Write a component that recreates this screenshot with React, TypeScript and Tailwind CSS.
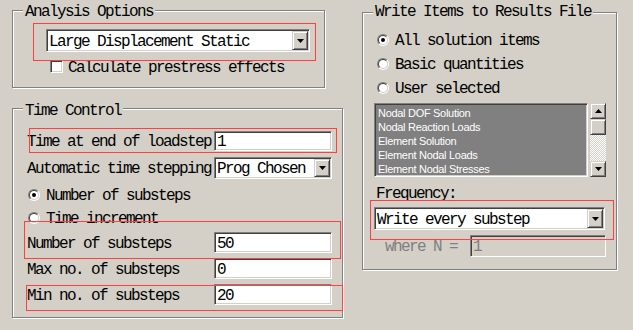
import { clsx } from 'clsx';

const sunken =
  'border border-t-[#808080] border-l-[#808080] border-r-white border-b-white shadow-[inset_1px_1px_0_#404040,inset_-1px_-1px_0_#d4d0c8]';
const raised =
  'border border-t-[#d4d0c8] border-l-[#d4d0c8] border-r-[#404040] border-b-[#404040] shadow-[inset_1px_1px_0_#fff,inset_-1px_-1px_0_#808080] bg-[#d4d0c8]';
const group =
  'relative border border-[#808080] shadow-[inset_1px_1px_0_#fff,1px_1px_0_#fff]';

function Arrow({ up = false }: { up?: boolean }) {
  return (
    <svg width="7" height="4" viewBox="0 0 7 4" className="block">
      <polygon points={up ? '3.5,0 7,4 0,4' : '0,0 7,0 3.5,4'} fill="#000" />
    </svg>
  );
}

function Combo({ text, className }: { text: string; className?: string }) {
  return (
    <div className={clsx('flex bg-white p-[1px]', sunken, className)}>
      <span className="flex-1 flex items-center pl-[1px] pt-[2px] whitespace-nowrap overflow-hidden">{text}</span>
      <div className={clsx('w-[16px] flex items-center justify-center', raised)}>
        <Arrow />
      </div>
    </div>
  );
}

function Field({ value, disabled = false, className }: { value: string; disabled?: boolean; className?: string }) {
  return (
    <div
      className={clsx(
        'flex items-center pl-[2px] pt-[2px]',
        sunken,
        disabled ? 'bg-[#d4d0c8] text-[#808080]' : 'bg-white',
        className,
      )}
    >
      {value}
    </div>
  );
}

function Radio({ checked = false }: { checked?: boolean }) {
  return (
    <div className="w-[12px] h-[12px] shrink-0 rounded-full border border-t-[#808080] border-l-[#808080] border-r-white border-b-white">
      <div className="w-full h-full rounded-full bg-white border border-t-[#404040] border-l-[#404040] border-r-[#d4d0c8] border-b-[#d4d0c8] flex items-center justify-center">
        {checked && <div className="w-[4px] h-[4px] rounded-full bg-black" />}
      </div>
    </div>
  );
}

function RadioRow({ label, checked, className }: { label: string; checked?: boolean; className?: string }) {
  return (
    <div className={clsx('flex items-center h-[12px]', className)}>
      <Radio checked={checked} />
      <span className="ml-[6px] pt-[2px] whitespace-nowrap">{label}</span>
    </div>
  );
}

function Title({ text, top }: { text: string; top: string }) {
  return (
    <span className={clsx('absolute left-[10px] px-[2px] bg-[#d4d0c8] whitespace-nowrap', top)}>{text}</span>
  );
}

function LabeledField({ label, value, className }: { label: string; value: string; className?: string }) {
  return (
    <div className={clsx('flex items-center h-[21px]', className)}>
      <span className="w-[201px] shrink-0 pl-[14px] pt-[2px] whitespace-nowrap">{label}</span>
      <Field value={value} className="w-[118px] h-full" />
    </div>
  );
}

const listItems = [
  'Nodal DOF Solution',
  'Nodal Reaction Loads',
  'Element Solution',
  'Element Nodal Loads',
  'Element Nodal Stresses',
];

export default function App() {
  return (
    <div className="relative w-[633px] h-[330px] overflow-hidden bg-[#d4d0c8] text-black font-['Liberation_Mono',monospace] text-[16px] tracking-[-1.6px] leading-[18px] flex items-start pl-[12px] pt-[10px]">
      {/* left column */}
      <div className="flex flex-col w-[331px]">
        <div className={clsx(group, 'w-[313px] h-[78px]')}>
          <Title text="Analysis Options" top="top-[-8px]" />
          <Combo text="Large Displacement Static" className="ml-[33px] mt-[18px] w-[264px] h-[23px]" />
          <div className="flex items-center ml-[37px] mt-[8px] h-[13px]">
            <div className={clsx('w-[13px] h-[13px] bg-white', sunken)} />
            <span className="ml-[5px] pt-[2px] whitespace-nowrap">Calculate prestress effects</span>
          </div>
        </div>

        <div className={clsx(group, 'mt-[20px] w-[331px] h-[210px]')}>
          <Title text="Time Control" top="top-[-7px]" />
          <LabeledField label="Time at end of loadstep" value="1" className="mt-[22px] !h-[20px]" />
          <div className="flex items-center h-[22px] mt-[6px]">
            <span className="w-[201px] shrink-0 pl-[14px] pt-[2px] whitespace-nowrap">Automatic time stepping</span>
            <Combo text="Prog Chosen" className="w-[118px] h-full" />
          </div>
          <RadioRow label="Number of substeps" checked className="ml-[15px] mt-[10px]" />
          <RadioRow label="Time increment" className="ml-[15px] mt-[11px]" />
          <LabeledField label="Number of substeps" value="50" className="mt-[8px]" />
          <LabeledField label="Max no. of substeps" value="0" className="mt-[5px]" />
          <LabeledField label="Min no. of substeps" value="20" className="mt-[5px]" />
        </div>
      </div>

      {/* right column */}
      <div className={clsx(group, 'ml-[19px] mt-[2px] w-[255px] h-[258px] flex flex-col')}>
        <Title text="Write Items to Results File" top="top-[-10px]" />
        <RadioRow label="All solution items" checked className="ml-[14px] mt-[21px]" />
        <RadioRow label="Basic quantities" className="ml-[14px] mt-[12px]" />
        <RadioRow label="User selected" className="ml-[14px] mt-[12px]" />

        <div className="flex mt-[9px] ml-[11px] h-[74px]">
          <div className={clsx('w-[214px] h-full bg-[#808080] p-[2px]', sunken)}>
            <div className="font-['Liberation_Sans',Arial,sans-serif] text-[11px] tracking-[-0.3px] leading-[14px] text-white pl-[1px]">
              {listItems.map((item) => (
                <div key={item} className="whitespace-nowrap">{item}</div>
              ))}
            </div>
          </div>
          <div className="ml-[2px] w-[16px] h-full flex flex-col">
            <div className={clsx('h-[16px] flex items-center justify-center', raised)}>
              <Arrow up />
            </div>
            <div className={clsx('h-[16px]', raised)} />
            <div className="flex-1 bg-[repeating-conic-gradient(#fff_0%_25%,#d4d0c8_0%_50%)] bg-[length:2px_2px]" />
            <div className={clsx('h-[16px] flex items-center justify-center', raised)}>
              <Arrow />
            </div>
          </div>
        </div>

        <div className="ml-[13px] mt-[8px] whitespace-nowrap">Frequency:</div>
        <Combo text="Write every substep" className="ml-[11px] mt-[4px] w-[231px] h-[23px]" />
        <div className="flex items-center ml-[22px] mt-[5px] h-[22px]">
          <span className="w-[85px] shrink-0 pt-[2px] text-[#808080] whitespace-nowrap">where N =</span>
          <Field value="1" disabled className="w-[136px] h-full" />
        </div>
      </div>

      {/* red annotation frames */}
      <div className="pointer-events-none absolute left-[33px] top-[23px] w-[283px] h-[38px] border border-[#ff4040]" />
      <div className="pointer-events-none absolute left-[29px] top-[128px] w-[308px] h-[25px] border border-[#ff4040]" />
      <div className="pointer-events-none absolute left-[24px] top-[221px] w-[317px] h-[38px] border border-[#ff4040]" />
      <div className="pointer-events-none absolute left-[26px] top-[285px] w-[317px] h-[26px] border border-[#ff4040]" />
      <div className="pointer-events-none absolute left-[370px] top-[200px] w-[244px] h-[40px] border border-[#ff4040]" />
    </div>
  );
}
